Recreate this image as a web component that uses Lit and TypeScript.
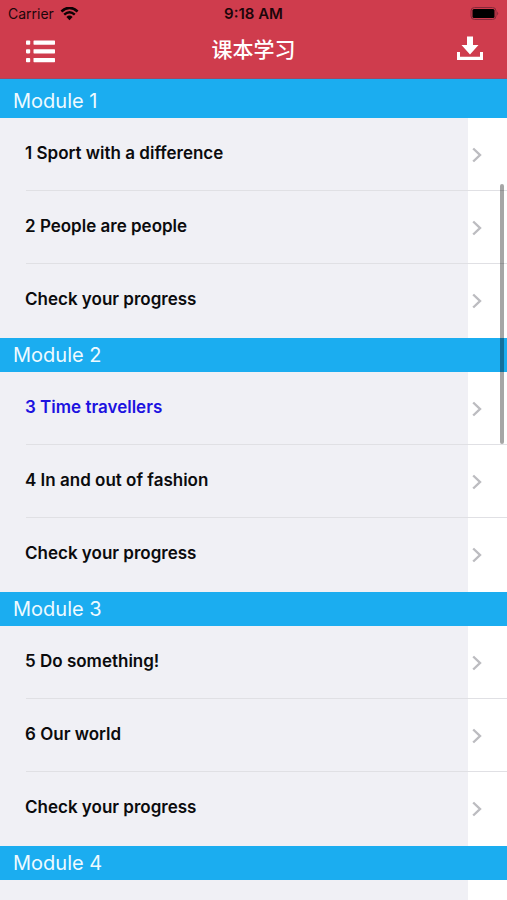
import { LitElement, html, css, svg } from "lit";
import { customElement, property } from "lit/decorators.js";

interface Lesson {
  title: string;
  current?: boolean;
}

interface CourseModule {
  name: string;
  lessons: Lesson[];
}

const MODULES: CourseModule[] = [
  {
    name: "Module 1",
    lessons: [
      { title: "1 Sport with a difference" },
      { title: "2 People are people" },
      { title: "Check your progress" },
    ],
  },
  {
    name: "Module 2",
    lessons: [
      { title: "3 Time travellers", current: true },
      { title: "4 In and out of fashion" },
      { title: "Check your progress" },
    ],
  },
  {
    name: "Module 3",
    lessons: [
      { title: "5 Do something!" },
      { title: "6 Our world" },
      { title: "Check your progress" },
    ],
  },
  { name: "Module 4", lessons: [] },
];

@customElement("status-bar")
export class StatusBar extends LitElement {
  static styles = css`
    :host {
      display: grid;
      grid-template-columns: 1fr auto 1fr;
      align-items: center;
      height: 28px;
      padding: 0 8px;
      color: #1c060a;
      font-size: 14px;
      line-height: 28px;
    }
    .carrier {
      display: flex;
      align-items: center;
      gap: 6px;
    }
    .time {
      font-size: 15px;
      font-weight: 600;
    }
    .battery {
      justify-self: end;
    }
    svg {
      display: block;
    }
  `;

  render() {
    return html`
      <span class="carrier">
        Carrier
        <svg width="19" height="14" viewBox="0 0 19 14" aria-hidden="true">
          <path d="M1.4 4.4Q9.5 -2.6 17.6 4.4" fill="none" stroke="#0c0204" stroke-width="2.6" />
          <path d="M4.2 7.6Q9.5 2.8 14.8 7.6" fill="none" stroke="#0c0204" stroke-width="2.4" />
          <path d="M6.4 10Q9.5 7.2 12.6 10L9.5 13.2Z" fill="#0c0204" />
        </svg>
      </span>
      <span class="time">9:18 AM</span>
      <svg class="battery" width="29" height="14" viewBox="0 0 29 14" aria-hidden="true">
        <rect x="1" y="0.5" width="25" height="12" rx="3.5" fill="none" stroke="#86283a" />
        <rect x="2.5" y="2" width="22" height="9" rx="1.5" fill="#000" />
        <path d="M27.2 4.5Q29.2 6.500 27.2 8.500Z" fill="#86283a" />
      </svg>
    `;
  }
}

@customElement("nav-bar")
export class NavBar extends LitElement {
  static styles = css`
    :host {
      display: grid;
      grid-template-columns: 1fr auto 1fr;
      align-items: center;
      height: 51px;
      padding: 0 18px;
      box-sizing: border-box;
      border-bottom: 1px solid #a8475f;
    }
    h1 {
      margin: 0;
      padding-bottom: 10px;
      color: #fff;
      font-size: 21px;
      line-height: 28px;
      font-weight: 500;
      font-family: "Noto Sans CJK SC", sans-serif;
    }
    button {
      display: flex;
      align-items: center;
      justify-content: center;
      box-sizing: border-box;
      width: 44px;
      height: 44px;
      padding: 0 0 4px;
      border: 0;
      background: none;
      cursor: pointer;
    }
    .download {
      justify-self: end;
      width: 38px;
      padding-bottom: 10px;
    }
  `;

  render() {
    return html`
      <button type="button" aria-label="目录">
        <svg width="30" height="23" viewBox="0 0 30 23" fill="#fff" aria-hidden="true">
          ${[0.5, 9.2, 18].map(
            (y) => svg`<rect x="1" y=${y} width="4.2" height="4.2" rx="0.8" />
              <rect x="8.5" y=${y} width="21.5" height="4.2" rx="0.6" />`
          )}
        </svg>
      </button>
      <h1>课本学习</h1>
      <button type="button" class="download" aria-label="下载">
        <svg width="26" height="24" viewBox="0 0 26 24" fill="#fff" aria-hidden="true">
          <path d="M10 0.5H16V9H21.5L13 18.5L4.5 9H10Z" />
          <path d="M0 16H3V20.8H23V16H26V24H0Z" />
        </svg>
      </button>
    `;
  }
}

@customElement("module-section")
export class ModuleSection extends LitElement {
  @property({ attribute: false }) module!: CourseModule;

  static styles = css`
    :host {
      display: flex;
      flex-direction: column;
      flex: none;
    }
    h2 {
      margin: 0;
      padding: 0 13px;
      background: #1badf0;
      color: #eefaff;
      font-size: 20px;
      line-height: 34px;
      font-weight: 400;
    }
    :host(.first) h2 {
      padding-top: 5px;
    }
    ul {
      margin: 0;
      padding: 0;
      list-style: none;
    }
    a {
      display: grid;
      grid-template-columns: 1fr 39px;
      height: 73px;
      color: #0b0b0d;
      font-size: 17px;
      line-height: 24px;
      font-weight: 600;
      text-decoration: none;
      background: linear-gradient(#e0e0e4, #e0e0e4) 26px 100% / 100% 1px no-repeat;
    }
    li:last-child a {
      height: 74px;
      background: none;
    }
    .title {
      align-self: center;
      padding: 0 0 4px 25px;
    }
    .current {
      color: #1c12e0;
    }
    svg {
      align-self: center;
      margin-left: 4px;
    }
  `;

  render() {
    return html`
      <h2>${this.module.name}</h2>
      <ul>
        ${this.module.lessons.map(
          (lesson) => html`<li>
            <a href="#" class=${lesson.current ? "current" : ""}>
              <span class="title">${lesson.title}</span>
              <svg width="10" height="16" viewBox="0 0 10 16" aria-hidden="true">
                <path d="M1.2 1.5L8 8L1.2 14.5" fill="none" stroke="#bcbcc0" stroke-width="2.4" />
              </svg>
            </a>
          </li>`
        )}
      </ul>
    `;
  }
}

@customElement("app-root")
export class AppRoot extends LitElement {
  static styles = css`
    :host {
      display: flex;
      flex-direction: column;
      height: 100vh;
      overflow: hidden;
      font-family: Inter, "Noto Sans CJK SC", sans-serif;
    }
    header {
      flex: none;
      background: #cf3c4d;
    }
    main {
      position: relative;
      flex: 1;
      min-height: 0;
      overflow: hidden;
      background: linear-gradient(to left, #fff 39px, #f0f0f5 39px);
    }
    .thumb {
      position: absolute;
      top: 105px;
      right: 3px;
      width: 4px;
      height: 260px;
      border-radius: 2px;
      background: rgba(0, 0, 0, 0.35);
    }
  `;

  render() {
    return html`
      <header>
        <status-bar></status-bar>
        <nav-bar></nav-bar>
      </header>
      <main>
        ${MODULES.map(
          (module, index) =>
            html`<module-section class=${index === 0 ? "first" : ""} .module=${module}></module-section>`
        )}
        <div class="thumb"></div>
      </main>
    `;
  }
}
